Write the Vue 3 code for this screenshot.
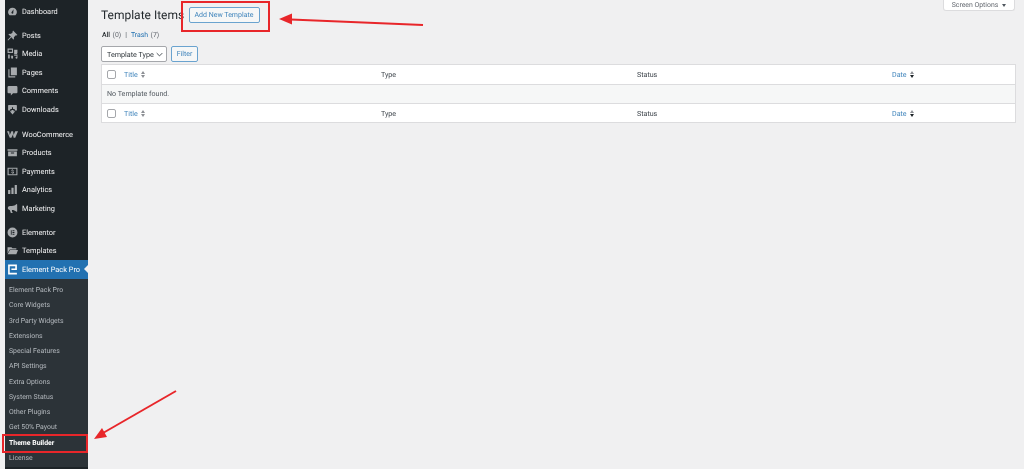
<script setup>
const group1 = [
  { label: 'Posts', icon: 'posts' },
  { label: 'Media', icon: 'media' },
  { label: 'Pages', icon: 'pages' },
  { label: 'Comments', icon: 'comments' },
  { label: 'Downloads', icon: 'downloads' },
]
const group2 = [
  { label: 'WooCommerce', icon: 'woo' },
  { label: 'Products', icon: 'products' },
  { label: 'Payments', icon: 'payments' },
  { label: 'Analytics', icon: 'analytics' },
  { label: 'Marketing', icon: 'marketing' },
]
const group3 = [
  { label: 'Elementor', icon: 'elementor' },
  { label: 'Templates', icon: 'templates' },
]
const sub = ['Element Pack Pro', 'Core Widgets', '3rd Party Widgets', 'Extensions', 'Special Features', 'API Settings', 'Extra Options', 'System Status', 'Other Plugins', 'Get 50% Payout', 'Theme Builder', 'License']
const paths = {
  dashboard: 'M10 3a8 8 0 0 0-8 8c0 2.400 1 4.500 2.700 6h10.600A8 8 0 0 0 18 11a8 8 0 0 0-8-8zm0 11a2 2 0 0 1-1.500-3.300L12 6l-.6 5.300A2 2 0 0 1 10 14z',
  posts: 'M11 1l8 8-2 1-1-.5-3.500 3.500c.5 1.800.3 3.300-.7 4.500L8 13l-6 6-1-1 6-6-4.500-4C3.700 7 5.200 6.800 7 7.300L10.500 4 10 3z',
  media: 'M1 1h10v8H1zM3 3v4h6V3zM13 3h6v6l-1 2h-5zM2 12h3v7H2zm5 2h4v3.500a1.800 1.800 0 1 1-1.500-1.700V16H7zm6-2h6v5.500a1.800 1.800 0 1 1-1.500-1.700V14H13z',
  pages: 'M7 1h11v14H7zM4.500 4v13H15v2H2.500V4z',
  comments: 'M3 2h14a2 2 0 0 1 2 2v9a2 2 0 0 1-2 2h-6l-4 4v-4H3a2 2 0 0 1-2-2V4a2 2 0 0 1 2-2z',
  downloads: 'M3 2h14a1 1 0 0 1 1 1v8a1 1 0 0 1-1 1h-3V9h-3V6H9v3H6v3H3a1 1 0 0 1-1-1V3a1 1 0 0 1 1-1zm7 17l-5-6h3v-2h4v2h3z',
  woo: 'M0 4h4l1 7 3-7h3l1 7 3-7h5l-5 12h-3l-1.200-6L8 16H5z',
  products: 'M1 4h18v3H1zm1 4h16v9H2zm5 2v2h6v-2z',
  payments: 'M1 3h18v14H1zM3 5v10h14V5zM10.700 6v1.100c1 .1 1.700.6 1.900 1.500l-1.200.3c-.2-.5-.6-.8-1.300-.8-.6 0-1 .3-1 .7 0 .5.500.7 1.300.9 1.300.3 2.300.7 2.300 2 0 1-.8 1.700-2 1.800V14H9.500v-1.100c-1.100-.2-1.900-.8-2-1.800l1.200-.2c.2.700.7 1 1.500 1 .7 0 1.200-.3 1.200-.8s-.4-.7-1.400-.9C9 9.900 8 9.500 8 8.300c0-1 .7-1.700 1.700-1.900V6z',
  analytics: 'M2 11h4v7H2zm6-4h4v11H8zm6-5h4v16h-4z',
  marketing: 'M17 2l1.500.500v13L17 16c-2-2.500-5-3.500-8-3.500V15l1.500 3H7l-2-5.500C3 12.300 1.500 11 1.500 9S3.300 5.500 5.500 5.500H9C12 5.500 15 4.500 17 2z',
  elementor: 'M10 1a9 9 0 1 0 0 18 9 9 0 0 0 0-18zM7 6h1.500v8H7zm3 0h3.500v1.600H10zm0 3.200h3.500v1.600H10zm0 3.200h3.500V14H10z',
  templates: 'M1 4h7l2 2h7v2H5L1 15zm4.500 5H20l-3 8H1z',
}
</script>

<template>
  <div class="page">
    <aside class="side">
      <div class="item dash">
        <svg class="ico" viewBox="0 0 20 20"><path :d="paths.dashboard" fill-rule="evenodd" /></svg>
        <span>Dashboard</span>
      </div>
      <div class="group">
        <div v-for="m in group1" :key="m.label" class="item">
          <svg class="ico" viewBox="0 0 20 20"><path :d="paths[m.icon]" fill-rule="evenodd" /></svg>
          <span>{{ m.label }}</span>
        </div>
      </div>
      <div class="group">
        <div v-for="m in group2" :key="m.label" class="item">
          <svg class="ico" viewBox="0 0 20 20"><path :d="paths[m.icon]" fill-rule="evenodd" /></svg>
          <span>{{ m.label }}</span>
        </div>
      </div>
      <div class="group last">
        <div v-for="m in group3" :key="m.label" class="item">
          <svg class="ico" viewBox="0 0 20 20"><path :d="paths[m.icon]" fill-rule="evenodd" /></svg>
          <span>{{ m.label }}</span>
        </div>
        <div class="item current">
          <svg class="ico ep" viewBox="0 0 20 20"><path d="M2 1h16v10H8V8h7V4H5v12h13v3H2z" /></svg>
          <span>Element Pack Pro</span>
          <i class="notch"></i>
        </div>
      </div>
      <ul class="submenu">
        <li v-for="s in sub" :key="s" :class="{ strong: s === 'Theme Builder' }">{{ s }}</li>
      </ul>
    </aside>

    <main class="main">
      <div class="tab">Screen Options <i class="tri"></i></div>
      <div class="head">
        <h1>Template Items</h1>
        <a class="btn add">Add New Template</a>
      </div>
      <div class="views"><b>All</b><em>(0)</em><span class="sep">|</span><a>Trash</a><em>(7)</em></div>
      <div class="filters">
        <div class="select"><span>Template Type</span>
          <svg viewBox="0 0 10 6" width="7" height="5"><path d="M1 1l4 4 4-4" fill="none" stroke="#3c434a" stroke-width="1.300" /></svg>
        </div>
        <a class="btn filter">Filter</a>
      </div>
      <div class="table">
        <div class="row">
          <i class="cb"></i>
          <span class="sortable"><a>Title</a><i class="sort"><b class="up"></b><b class="down"></b></i></span>
          <span>Type</span><span>Status</span>
          <span class="sortable"><a>Date</a><i class="sort dark"><b class="up"></b><b class="down"></b></i></span>
        </div>
        <div class="empty">No Template found.</div>
        <div class="row">
          <i class="cb"></i>
          <span class="sortable"><a>Title</a><i class="sort"><b class="up"></b><b class="down"></b></i></span>
          <span>Type</span><span>Status</span>
          <span class="sortable"><a>Date</a><i class="sort dark"><b class="up"></b><b class="down"></b></i></span>
        </div>
      </div>
    </main>

    <div class="mark mark-add"></div>
    <div class="mark mark-theme"></div>
    <svg class="arrows" width="1024" height="469" viewBox="0 0 1024 469">
      <path d="M423 25L291 19.500" stroke="#e8262a" stroke-width="2" fill="none" />
      <path d="M279 19l13-5.500 0 11z" fill="#e8262a" />
      <path d="M176 391L103 433" stroke="#e8262a" stroke-width="2" fill="none" />
      <path d="M94 439l8-11 5 9z" fill="#e8262a" />
    </svg>
  </div>
</template>

<style>
html, body { margin: 0; background: #f0f0f1; }
</style>

<style scoped>
.page {
  position: relative;
  display: flex;
  width: 1024px;
  height: 469px;
  overflow: hidden;
  background: #f0f0f1;
  font-family: Roboto, "Noto Sans", sans-serif;
  font-size: 7.400px;
  color: #3c434a;
  text-rendering: geometricPrecision;
  filter: blur(0.4px);
}
.side {
  flex: none;
  width: 83px;
  height: 469px;
  margin-left: 5px;
  background: #1d2327;
  padding-top: 2px;
  box-sizing: border-box;
}
.item {
  display: flex;
  align-items: center;
  position: relative;
  height: 18.5px;
  padding-left: 2px;
  color: #f0f0f1;
  white-space: nowrap;
}
.dash { height: 18px; }
.group { margin-top: 6px; }
.group:nth-of-type(3) { margin-top: 6.5px; }
.group.last { margin-top: 5.5px; }
.ico {
  width: 11px;
  height: 11px;
  margin-right: 4px;
  fill: #a7aaad;
  flex: none;
}
.current {
  background: #2271b1;
  color: #fff;
}
.current .ep { fill: #fff; }
.notch {
  position: absolute;
  right: 0;
  top: 5px;
  border: 4.500px solid transparent;
  border-right: 4.500px solid #f0f0f1;
  border-left: 0;
}
.submenu {
  list-style: none;
  margin: 0;
  padding: 4.500px 0 0;
  background: #2c3338;
  height: 188px;
  box-sizing: border-box;
}
.submenu li {
  height: 15.25px;
  line-height: 15.25px;
  padding-left: 4px;
  color: #b4b9be;
  font-size: 6.900px;
  white-space: nowrap;
}
.submenu .strong { color: #fff; font-weight: 700; }
.main {
  position: relative;
  flex: 1;
  padding: 0 8px 0 13px;
  min-width: 0;
}
.tab {
  position: absolute;
  top: 0;
  right: 9px;
  width: 72px;
  height: 11px;
  box-sizing: border-box;
  display: flex;
  align-items: center;
  justify-content: center;
  gap: 4px;
  background: #fff;
  border: 1px solid #dcdcde;
  border-top: 0;
  border-radius: 0 0 3px 3px;
  color: #646970;
  font-size: 6.900px;
}
.tri {
  border: 2.500px solid transparent;
  border-top: 3px solid #50575e;
  border-bottom: 0;
}
.head {
  display: flex;
  align-items: center;
  height: 30px;
}
h1 {
  flex: none;
  margin: 0;
  font-size: 12px;
  font-weight: 400;
  color: #1d2327;
  width: 87.500px;
  white-space: nowrap;
}
.btn {
  display: flex;
  align-items: center;
  justify-content: center;
  box-sizing: border-box;
  height: 16px;
  border: 1px solid #6aa3cf;
  border-radius: 2px;
  background: #f6f7f7;
  color: #3f84bb;
  font-size: 7px;
}
.add { width: 71px; }
.views {
  height: 16px;
  display: flex;
  align-items: center;
  gap: 2.500px;
  font-size: 6.900px;
  margin-top: -3px;
  color: #50575e;
  padding-left: 1px;
}
.views b { color: #1d2327; font-weight: 500; }
.views em { font-style: normal; color: #646970; }
.views .sep { margin: 0 1.500px; }
.views a { color: #2271b1; }
.filters {
  display: flex;
  gap: 4px;
  margin-top: 3px;
}
.select {
  display: flex;
  align-items: center;
  justify-content: space-between;
  box-sizing: border-box;
  width: 66px;
  height: 16px;
  padding: 0 3px 0 5px;
  background: #fff;
  border: 1px solid #a5a7ab;
  border-radius: 2px;
  color: #2c3338;
  font-size: 7.200px;
  white-space: nowrap;
}
.filter { width: 27px; }
.table {
  margin-top: 2px;
  width: 915px;
  box-sizing: border-box;
  background: #fff;
  border: 1px solid #dcdcde;
}
.row {
  display: grid;
  grid-template-columns: 22px 257px 256px 255px 1fr;
  align-items: center;
  height: 18.5px;
  padding-top: 1px;
  box-sizing: border-box;
  font-size: 7.100px;
}
.empty {
  height: 20px;
  box-sizing: border-box;
  display: flex;
  align-items: center;
  padding-left: 5px;
  background: #f6f7f7;
  border-top: 1px solid #dcdcde;
  border-bottom: 1px solid #dcdcde;
  color: #50575e;
  font-size: 7.100px;
}
.cb {
  display: block;
  width: 9px;
  height: 9px;
  box-sizing: border-box;
  margin-left: 5px;
  background: #fff;
  border: 1px solid #a5a7ab;
  border-radius: 2px;
}
.sortable { display: flex; align-items: center; gap: 3px; }
.sortable a { color: #3f84bb; }
.sort {
  display: inline-flex;
  flex-direction: column;
  gap: 1px;
}
.sort b {
  display: block;
  border: 2px solid transparent;
  border-top: 0;
  border-bottom: 3px solid #8c8f94;
}
.sort .down {
  border-bottom: 0;
  border-top: 3px solid #8c8f94;
}
.sort.dark .down { border-top-color: #1d2327; border-width: 3px 2.500px 0; }
.mark {
  position: absolute;
  box-sizing: border-box;
  border: 2px solid #e8262a;
}
.mark-add { left: 181px; top: 1px; width: 89px; height: 31px; }
.mark-theme { left: 2px; top: 434px; width: 86px; height: 19px; }
.arrows { position: absolute; left: 0; top: 0; pointer-events: none; }
</style>
